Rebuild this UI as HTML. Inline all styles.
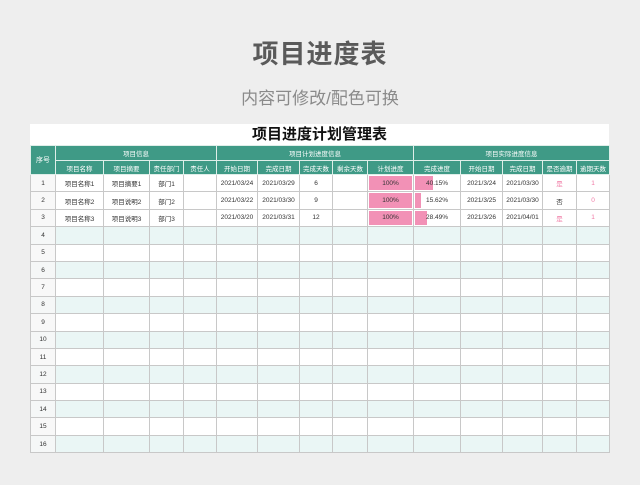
<!DOCTYPE html>
<html><head><meta charset="utf-8"><style>
body{margin:0;background:#eeeeee;width:640px;height:485px;overflow:hidden;font-family:"Liberation Sans","Noto Sans CJK SC",sans-serif;position:relative}
.t1{position:absolute;top:34px;width:640px;text-align:center;font-size:26px;font-weight:bold;color:#5a5a5a;letter-spacing:1px}
.t2{position:absolute;top:84px;width:640px;text-align:center;font-size:17px;color:#8a8a8a}
.band{position:absolute;left:30px;top:124px;width:579px;height:21px;background:#fff;text-align:center;font-size:15px;font-weight:bold;line-height:21px;color:#111}
table{position:absolute;left:30px;top:145px;border-collapse:collapse;table-layout:fixed;width:580px}
td{border:1px solid #c8c8c8;padding:0;text-align:center;font-size:6.5px;color:#333;overflow:hidden;white-space:nowrap;position:relative}
tr.h td{background:#3f9a86;color:#fff;border-color:#dfeee9;font-size:6.5px}
tr.d td{height:16.4px;background:#fff}
tr.d td:first-child{background:#f8f8f8}
tr.e td{background:#eaf6f5}
tr.e td:first-child{background:#f5f7f7}
.bar{position:absolute;left:1px;top:1px;bottom:1px;background:#f291b6}
.txt{position:relative}
.pk{color:#f07aa5}
</style></head><body>
<div class="t1">项目进度表</div>
<div class="t2">内容可修改/配色可换</div>
<div class="band">项目进度计划管理表</div>
<table>
<colgroup><col style="width:25px"><col style="width:48px"><col style="width:46px"><col style="width:34px"><col style="width:33px"><col style="width:41px"><col style="width:42px"><col style="width:33px"><col style="width:35px"><col style="width:46px"><col style="width:47px"><col style="width:42px"><col style="width:40px"><col style="width:34px"><col style="width:33px"></colgroup>
<tr class="h" style="height:15px"><td rowspan="2" style="font-size:7px">序号</td><td colspan="4">项目信息</td><td colspan="5">项目计划进度信息</td><td colspan="5">项目实际进度信息</td></tr>
<tr class="h" style="height:14px"><td>项目名称</td><td>项目摘要</td><td>责任部门</td><td>责任人</td><td>开始日期</td><td>完成日期</td><td>完成天数</td><td>剩余天数</td><td>计划进度</td><td>完成进度</td><td>开始日期</td><td>完成日期</td><td>是否逾期</td><td>逾期天数</td></tr>
<tr class="d"><td>1</td><td>项目名称1</td><td>项目摘要1</td><td>部门1</td><td></td><td>2021/03/24</td><td>2021/03/29</td><td>6</td><td></td><td><div class="bar" style="right:1px"></div><span class="txt">100%</span></td><td><div class="bar" style="width:18px"></div><span class="txt">40.15%</span></td><td>2021/3/24</td><td>2021/03/30</td><td class="pk">是</td><td class="pk">1</td></tr>
<tr class="d"><td>2</td><td>项目名称2</td><td>项目说明2</td><td>部门2</td><td></td><td>2021/03/22</td><td>2021/03/30</td><td>9</td><td></td><td><div class="bar" style="right:1px"></div><span class="txt">100%</span></td><td><div class="bar" style="width:6px"></div><span class="txt">15.62%</span></td><td>2021/3/25</td><td>2021/03/30</td><td>否</td><td class="pk">0</td></tr>
<tr class="d"><td>3</td><td>项目名称3</td><td>项目说明3</td><td>部门3</td><td></td><td>2021/03/20</td><td>2021/03/31</td><td>12</td><td></td><td><div class="bar" style="right:1px"></div><span class="txt">100%</span></td><td><div class="bar" style="width:12px"></div><span class="txt">28.49%</span></td><td>2021/3/26</td><td>2021/04/01</td><td class="pk">是</td><td class="pk">1</td></tr>
<tr class="d e"><td>4</td><td></td><td></td><td></td><td></td><td></td><td></td><td></td><td></td><td></td><td></td><td></td><td></td><td></td><td></td></tr>
<tr class="d"><td>5</td><td></td><td></td><td></td><td></td><td></td><td></td><td></td><td></td><td></td><td></td><td></td><td></td><td></td><td></td></tr>
<tr class="d e"><td>6</td><td></td><td></td><td></td><td></td><td></td><td></td><td></td><td></td><td></td><td></td><td></td><td></td><td></td><td></td></tr>
<tr class="d"><td>7</td><td></td><td></td><td></td><td></td><td></td><td></td><td></td><td></td><td></td><td></td><td></td><td></td><td></td><td></td></tr>
<tr class="d e"><td>8</td><td></td><td></td><td></td><td></td><td></td><td></td><td></td><td></td><td></td><td></td><td></td><td></td><td></td><td></td></tr>
<tr class="d"><td>9</td><td></td><td></td><td></td><td></td><td></td><td></td><td></td><td></td><td></td><td></td><td></td><td></td><td></td><td></td></tr>
<tr class="d e"><td>10</td><td></td><td></td><td></td><td></td><td></td><td></td><td></td><td></td><td></td><td></td><td></td><td></td><td></td><td></td></tr>
<tr class="d"><td>11</td><td></td><td></td><td></td><td></td><td></td><td></td><td></td><td></td><td></td><td></td><td></td><td></td><td></td><td></td></tr>
<tr class="d e"><td>12</td><td></td><td></td><td></td><td></td><td></td><td></td><td></td><td></td><td></td><td></td><td></td><td></td><td></td><td></td></tr>
<tr class="d"><td>13</td><td></td><td></td><td></td><td></td><td></td><td></td><td></td><td></td><td></td><td></td><td></td><td></td><td></td><td></td></tr>
<tr class="d e"><td>14</td><td></td><td></td><td></td><td></td><td></td><td></td><td></td><td></td><td></td><td></td><td></td><td></td><td></td><td></td></tr>
<tr class="d"><td>15</td><td></td><td></td><td></td><td></td><td></td><td></td><td></td><td></td><td></td><td></td><td></td><td></td><td></td><td></td></tr>
<tr class="d e"><td>16</td><td></td><td></td><td></td><td></td><td></td><td></td><td></td><td></td><td></td><td></td><td></td><td></td><td></td><td></td></tr>
</table>
</body></html>
